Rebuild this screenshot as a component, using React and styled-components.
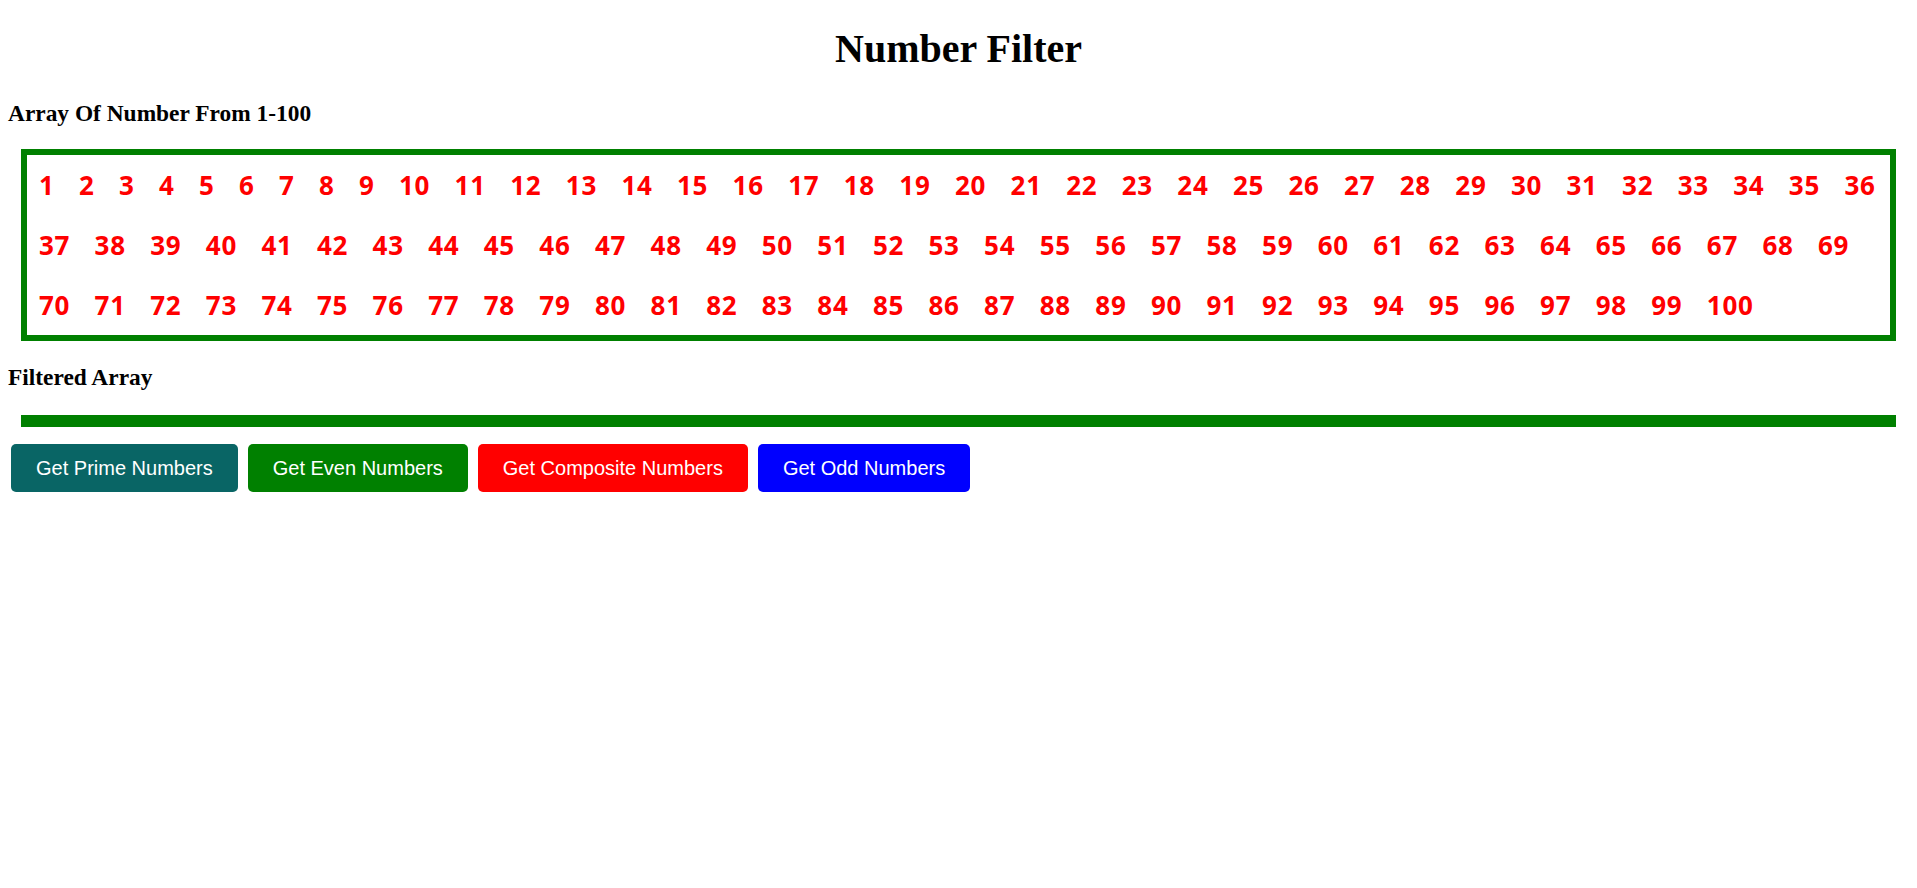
import React from 'react'
import styled, { createGlobalStyle } from 'styled-components'

const numbers = Array.from({ length: 100 }, (_, i) => i + 1)

const buttons = [
    { label: 'Get Prime Numbers', color: '#096565' },
    { label: 'Get Even Numbers', color: '#008000' },
    { label: 'Get Composite Numbers', color: '#ff0000' },
    { label: 'Get Odd Numbers', color: '#0000ff' },
]

const App = () => {
    return (
        <>
            <GlobalStyle />
            <Title>Number Filter</Title>
            <SectionLabel>Array Of Number From 1-100</SectionLabel>
            <NumberBox>
                {numbers.map((n) => (
                    <NumberItem key={n}>{n}</NumberItem>
                ))}
            </NumberBox>
            <SectionLabel>Filtered Array</SectionLabel>
            <ResultBox />
            <ButtonRow>
                {buttons.map((b) => (
                    <FilterButton key={b.label} $bg={b.color}>
                        {b.label}
                    </FilterButton>
                ))}
            </ButtonRow>
        </>
    )
}

export default App

const GlobalStyle = createGlobalStyle`
    body {
        margin: 0;
        padding: 0 8px;
        background: #fff;
        font-family: "Liberation Serif", "Times New Roman", serif;
        color: #000;
    }
`

const Title = styled.h1`
    font-size: 40px;
    font-weight: 700;
    text-align: center;
    margin: 25px 0 28px;
`

const SectionLabel = styled.h2`
    font-size: 23.4px;
    font-weight: 700;
    line-height: 26px;
    margin: 23px 0;
`

const NumberBox = styled.div`
    display: flex;
    flex-wrap: wrap;
    column-gap: 24.4px;
    margin: 0 13px;
    padding: 0 12px;
    border: 6px solid #008000;
`

const ResultBox = styled(NumberBox)`
    margin-top: 25px;
`

const NumberItem = styled.span`
    font-family: "Open Sans", "DejaVu Sans", sans-serif;
    font-size: 26px;
    font-weight: 700;
    letter-spacing: 0.73px;
    line-height: 60px;
    color: #ff0000;
`

const ButtonRow = styled.div`
    display: flex;
    gap: 10px;
    margin-top: 17px;
    padding-left: 3px;
`

const FilterButton = styled.button`
    background-color: ${(p) => p.$bg};
    color: #fff;
    border: none;
    border-radius: 5px;
    padding: 12px 25px;
    font-family: "Liberation Sans", Arial, sans-serif;
    font-size: 20px;
    line-height: 24px;
    cursor: pointer;
`
